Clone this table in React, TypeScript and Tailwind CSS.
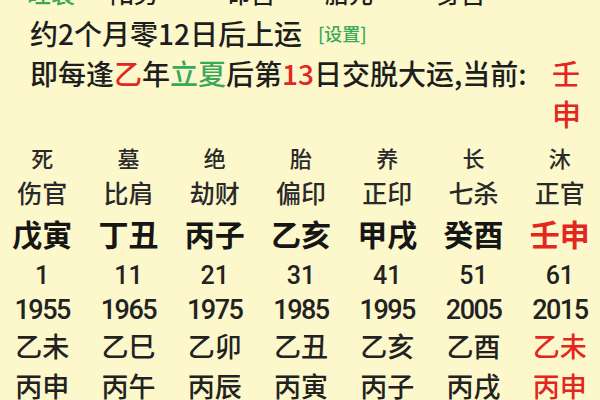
const cols = [
  { d: "死", s: "伤官", gz: "戊寅", age: "1", year: "1955", a: "乙未", b: "丙申" },
  { d: "墓", s: "比肩", gz: "丁丑", age: "11", year: "1965", a: "乙巳", b: "丙午" },
  { d: "绝", s: "劫财", gz: "丙子", age: "21", year: "1975", a: "乙卯", b: "丙辰" },
  { d: "胎", s: "偏印", gz: "乙亥", age: "31", year: "1985", a: "乙丑", b: "丙寅" },
  { d: "养", s: "正印", gz: "甲戌", age: "41", year: "1995", a: "乙亥", b: "丙子" },
  { d: "长", s: "七杀", gz: "癸酉", age: "51", year: "2005", a: "乙酉", b: "丙戌" },
  { d: "沐", s: "正官", gz: "壬申", age: "61", year: "2015", a: "乙未", b: "丙申", current: true },
];

const cjk = { fontFamily: '"Noto Sans CJK SC", "Noto Sans", sans-serif' };
const num = { fontFamily: 'Roboto, "Noto Sans CJK SC", sans-serif' };

export default function App() {
  return (
    <div
      className="h-[400px] w-[600px] overflow-hidden bg-[#fcf8cb] text-[#1e1e1e]"
      style={cjk}
    >
      {/* row cut off by the top edge */}
      <div className="mt-[-28px] flex h-[41px] items-center text-[24px] font-medium leading-none">
        <span className="ml-[27px] w-[60px] text-[#3aa85a]">旺衰</span>
        <span className="ml-[23px] w-[60px]">阳男</span>
        <span className="ml-[57px] w-[60px]">命宫</span>
        <span className="ml-[38px] w-[60px]">胎元</span>
        <span className="ml-[52px] w-[60px]">身宫</span>
      </div>

      <div className="flex h-[40px] items-center pl-[30px] text-[28px] font-medium leading-none">
        <span>约2个月零12日后上运</span>
        <span className="ml-[16px] text-[18px] text-[#3aa85a]">[设置]</span>
      </div>

      <div className="flex h-[40px] items-center pl-[30px] pr-[20px] text-[28px] font-medium leading-none whitespace-nowrap">
        <span>即每逢</span>
        <span className="text-[#e3261f]">乙</span>
        <span>年</span>
        <span className="text-[#3aa85a]">立夏</span>
        <span>后第</span>
        <span className="text-[#e3261f]">13</span>
        <span>日交脱大运,当前:</span>
        <span className="ml-auto text-[#e3261f]">壬</span>
      </div>
      <div className="flex h-[40px] items-center justify-end pr-[19px] text-[29px] font-medium leading-none text-[#e3261f]">
        申
      </div>

      <div className="ml-[-1px] mt-[5px] grid w-[604px] grid-cols-7 text-center font-medium leading-none">
        {cols.map((c) => (
          <div key={c.year} className="flex flex-col">
            <div className="flex h-[38px] items-center justify-center text-[22px] text-[#2a2a2a]">{c.d}</div>
            <div className="flex h-[32px] items-center justify-center text-[25px] text-[#2a2a2a]">{c.s}</div>
            <div
              className={`flex h-[50px] items-center justify-center text-[30px] font-bold ${
                c.current ? "text-[#e3261f]" : "text-[#161616]"
              }`}
            >
              {c.gz}
            </div>
            <div className="flex h-[34px] items-center justify-center text-[25px] text-[#222]" style={num}>
              {c.age}
            </div>
            <div
              className="flex h-[36px] items-center justify-center text-[27px] tracking-[-1.5px] text-[#222]"
              style={num}
            >
              {c.year}
            </div>
            <div
              className={`flex h-[34px] items-center justify-center text-[27px] ${
                c.current ? "text-[#e3261f]" : "text-[#222]"
              }`}
            >
              {c.a}
            </div>
            <div
              className={`flex h-[46px] items-center justify-center text-[27px] ${
                c.current ? "text-[#e3261f]" : "text-[#222]"
              }`}
            >
              {c.b}
            </div>
          </div>
        ))}
      </div>
    </div>
  );
}
